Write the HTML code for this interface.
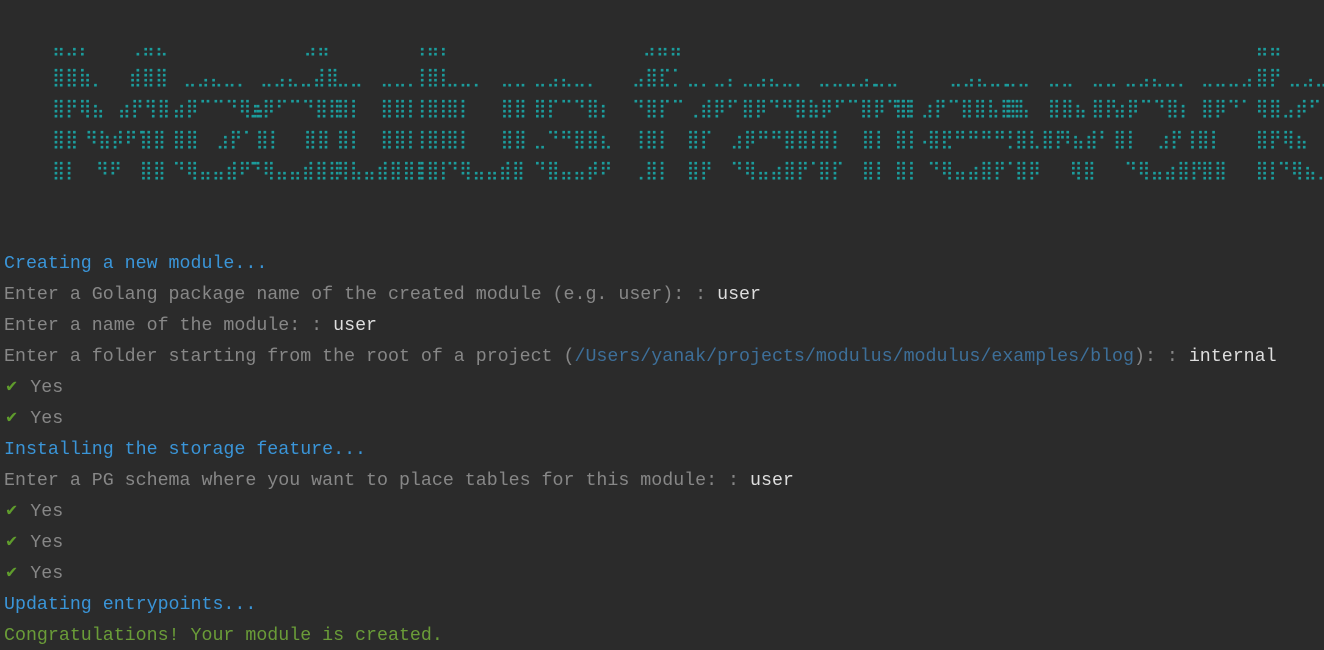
<!DOCTYPE html>
<html><head><meta charset="utf-8"><style>
html,body{margin:0;padding:0;background:#2b2b2b;width:1324px;height:650px;overflow:hidden;position:relative}
.a span{position:absolute;left:calc(52px + var(--c)*10.94px);font-family:"DejaVu Sans Mono",monospace;font-size:18px;line-height:20px;color:#1b9c9c;white-space:pre}
.r1 span{top:37px}.r2 span{top:68px}.r3 span{top:99px}.r4 span{top:130px}.r5 span{top:161px}
.t{position:absolute;left:4px;top:249px;font-family:"Liberation Mono",monospace;font-size:18.3px;line-height:31px;color:#878787;white-space:pre}
.b{color:#3a95d8}.w{color:#dedede}.p{color:#3d6f99}.g{color:#5f9c2c;display:inline-block;transform:scale(.85)}.gg{color:#6a9c38}
</style></head><body>
<div class="a r1"><span style="--c:0">⣤⣠⡄</span><span style="--c:7">⢀⣤⣄</span><span style="--c:23">⣠⣤</span><span style="--c:33">⢠⣤⡄</span><span style="--c:54">⣠⣤⣤</span><span style="--c:110">⣤⣤</span></div>
<div class="a r2"><span style="--c:0">⣿⣿⣷⡀</span><span style="--c:7">⣾⣿⣿</span><span style="--c:12">⣀⣠⣄⣀⡀</span><span style="--c:19">⣀⣠⣄⣀⣼⣿</span><span style="--c:26">⣀⣀</span><span style="--c:30">⣀⣀⡀</span><span style="--c:33">⢸⣿⡇</span><span style="--c:36">⣀⣀⡀</span><span style="--c:41">⣀⣀</span><span style="--c:44">⣀⣠⣄⣀⡀</span><span style="--c:53">⣠⣿⣏⡁</span><span style="--c:58">⣀⡀⣀⡄</span><span style="--c:63">⣀⣠⣄⣀⡀</span><span style="--c:70">⣀⣀⣀⣠⡀</span><span style="--c:75">⣀⣀</span><span style="--c:82">⣀⣠⣄⣀⡀</span><span style="--c:87">⣀⣀</span><span style="--c:91">⣀⣀</span><span style="--c:95">⣀⣀</span><span style="--c:98">⣀⣠⣄⣀⡀</span><span style="--c:105">⣀⣀⣀⣠</span><span style="--c:110">⣿⡟</span><span style="--c:113">⣀⣠⣀</span></div>
<div class="a r3"><span style="--c:0">⣿⡟⢿⣦</span><span style="--c:6">⣴⡟⢻⣿</span><span style="--c:11">⣴⡿⠉⠉⠙⢿⣦</span><span style="--c:18">⣰⡿⠋⠉⠙⣿⣿</span><span style="--c:26">⣿⡇</span><span style="--c:30">⣿⣿⡇</span><span style="--c:33">⢸⣿⡇</span><span style="--c:36">⣿⡇</span><span style="--c:41">⣿⣿</span><span style="--c:44">⣿⡏⠉⠙⣿⡆</span><span style="--c:53">⠙⣿⡏⠉</span><span style="--c:58">⢀⣾⡿⠋</span><span style="--c:63">⣿⡿⠙⠛⣿⣧</span><span style="--c:69">⣰⡿⠋⠉⣿⡿⠙⣿</span><span style="--c:77">⣿⡇⣰⡟⠉⣿⣿⣧⣿⡇</span><span style="--c:87">⣿⣧</span><span style="--c:91">⣿⣿⣦</span><span style="--c:95">⣿⡟</span><span style="--c:97">⣴⡿⠉⠙⣿⡆</span><span style="--c:105">⣿⡿⠙⠁</span><span style="--c:110">⢿⣿⣠⡾⠋</span></div>
<div class="a r4"><span style="--c:0">⣿⣿</span><span style="--c:3">⠻⣷⡾⠟⠁</span><span style="--c:8">⣿⣿</span><span style="--c:11">⣿⣿</span><span style="--c:15">⣰⡟⠁⣿⡇</span><span style="--c:23">⣿⣿</span><span style="--c:26">⣿⡇</span><span style="--c:30">⣿⣿⡇</span><span style="--c:33">⢸⣿⡇</span><span style="--c:36">⣿⡇</span><span style="--c:41">⣿⣿</span><span style="--c:44">⣀⠙⠛⣿⣿⣆</span><span style="--c:53">⢸⣿⡇</span><span style="--c:58">⣿⡏</span><span style="--c:62">⣰⡿⠛⠛⣿⣿⡇</span><span style="--c:70">⣿⡇</span><span style="--c:74">⣿⡇</span><span style="--c:77">⣿⡇⠄</span><span style="--c:80">⣿⣟⠛⠛⠛⠛⡃</span><span style="--c:88">⣿⣇⣿⡇</span><span style="--c:92">⠻⣦⣾⠃</span><span style="--c:97">⣿⡇</span><span style="--c:101">⣰⡟⢸⣿⡇</span><span style="--c:110">⣿⡟⢿⣦</span></div>
<div class="a r5"><span style="--c:0">⣿⡇</span><span style="--c:4">⠻⠟</span><span style="--c:8">⣿⣿</span><span style="--c:11">⠙⢿⣤⣤⣾⠟⠁</span><span style="--c:18">⠙⢿⣤⣤⣾⣿⣿</span><span style="--c:26">⢿⣧⣤⣾⣿⣿⡇</span><span style="--c:33">⢸⣿⡇</span><span style="--c:36">⠙⢿⣤⣤⣾⣿</span><span style="--c:44">⠙⣿⣤⣤⡾⠟</span><span style="--c:53">⢀⣿⡇</span><span style="--c:58">⣿⡟</span><span style="--c:62">⠙⢿⣤⣴⣿⡟⠁</span><span style="--c:70">⣿⡏</span><span style="--c:74">⣿⡇</span><span style="--c:77">⣿⡇</span><span style="--c:80">⠙⢿⣤⣴⣿⡟⠁</span><span style="--c:88">⣿⡿</span><span style="--c:93">⢿⣿</span><span style="--c:98">⠙⢿⣤⣴⣿⡟</span><span style="--c:105">⣿⣿</span><span style="--c:110">⣿⡇</span><span style="--c:112">⠙⢿⣦⡀</span></div>
<div class="t"><span class="b">Creating a new module...</span>
Enter a Golang package name of the created module (e.g. user): : <span class="w">user</span>
Enter a name of the module: : <span class="w">user</span>
Enter a folder starting from the root of a project (<span class="p">/Users/yanak/projects/modulus/modulus/examples/blog</span>): : <span class="w">internal</span>
<span class="g">✔</span> Yes
<span class="g">✔</span> Yes
<span class="b">Installing the storage feature...</span>
Enter a PG schema where you want to place tables for this module: : <span class="w">user</span>
<span class="g">✔</span> Yes
<span class="g">✔</span> Yes
<span class="g">✔</span> Yes
<span class="b">Updating entrypoints...</span>
<span class="gg">Congratulations! Your module is created.</span></div>
</body></html>
